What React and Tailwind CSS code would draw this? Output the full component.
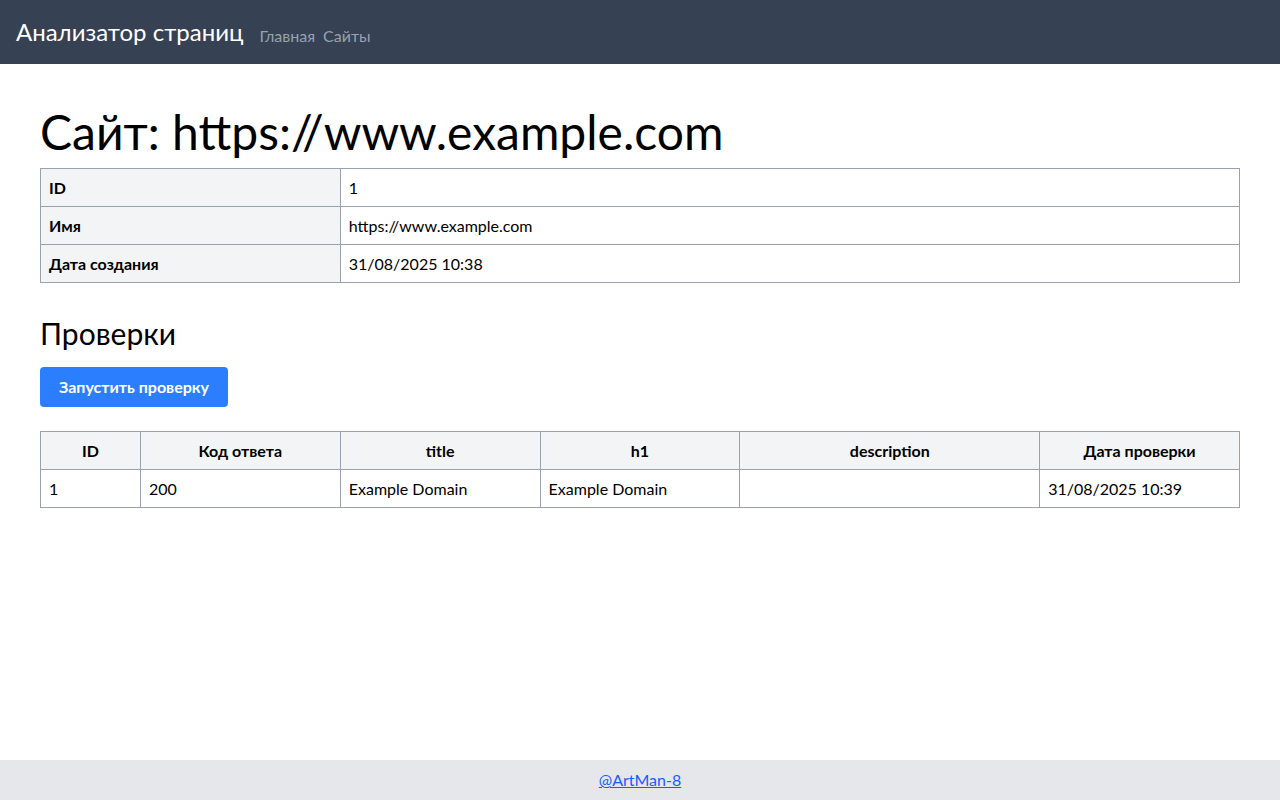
const site = {
  id: 1,
  name: "https://www.example.com",
  createdAt: "31/08/2025 10:38",
};

const checks = [
  {
    id: 1,
    statusCode: 200,
    title: "Example Domain",
    h1: "Example Domain",
    description: "",
    createdAt: "31/08/2025 10:39",
  },
];

const Header = () => {
  return (
    <header className="h-16 bg-gray-700 flex items-center px-4 gap-4">
      <a href="#" className="text-2xl text-white">
        Анализатор страниц
      </a>
      <nav className="flex gap-2 text-base text-gray-400 pt-2">
        <a href="#">Главная</a>
        <a href="#">Сайты</a>
      </nav>
    </header>
  );
};

const App = () => {
  return (
    <div
      className="min-h-screen flex flex-col text-black"
      style={{ fontFamily: 'Lato, "Noto Sans", sans-serif' }}
    >
      <Header />
      <main className="flex-1 px-10 pt-11">
        <h1 className="text-5xl leading-none mb-3">Сайт: {site.name}</h1>
        <table className="w-full border-collapse border border-gray-400">
          <tbody>
            <tr>
              <td className="w-1/4 border border-gray-400 bg-gray-100 px-2 py-[6.5px] font-bold">ID</td>
              <td className="border border-gray-400 px-2 py-[6.5px]">{site.id}</td>
            </tr>
            <tr>
              <td className="w-1/4 border border-gray-400 bg-gray-100 px-2 py-[6.5px] font-bold">Имя</td>
              <td className="border border-gray-400 px-2 py-[6.5px]">{site.name}</td>
            </tr>
            <tr>
              <td className="w-1/4 border border-gray-400 bg-gray-100 px-2 py-[6.5px] font-bold">Дата создания</td>
              <td className="border border-gray-400 px-2 py-[6.5px]">{site.createdAt}</td>
            </tr>
          </tbody>
        </table>

        <h2 className="text-3xl mt-8 mb-4">Проверки</h2>
        <button className="bg-blue-500 text-white font-bold px-[19px] py-2 rounded mb-6">
          Запустить проверку
        </button>

        <table className="w-full border-collapse border border-gray-400">
          <thead className="bg-gray-100">
            <tr>
              <th className="w-1/12 border border-gray-400 px-2 py-[6.5px]">ID</th>
              <th className="w-1/6 border border-gray-400 px-2 py-[6.5px]">Код ответа</th>
              <th className="w-1/6 border border-gray-400 px-2 py-[6.5px]">title</th>
              <th className="w-1/6 border border-gray-400 px-2 py-[6.5px]">h1</th>
              <th className="w-1/4 border border-gray-400 px-2 py-[6.5px]">description</th>
              <th className="w-1/6 border border-gray-400 px-2 py-[6.5px]">Дата проверки</th>
            </tr>
          </thead>
          <tbody>
            {checks.map((check) => (
              <tr key={check.id}>
                <td className="border border-gray-400 px-2 py-[6.5px]">{check.id}</td>
                <td className="border border-gray-400 px-2 py-[6.5px]">{check.statusCode}</td>
                <td className="border border-gray-400 px-2 py-[6.5px]">{check.title}</td>
                <td className="border border-gray-400 px-2 py-[6.5px]">{check.h1}</td>
                <td className="border border-gray-400 px-2 py-[6.5px]">{check.description}</td>
                <td className="border border-gray-400 px-2 py-[6.5px]">{check.createdAt}</td>
              </tr>
            ))}
          </tbody>
        </table>
      </main>
      <footer className="h-10 bg-gray-200 flex items-center justify-center">
        <a href="#" className="text-blue-600 underline">
          @ArtMan-8
        </a>
      </footer>
    </div>
  );
};

export default App;
